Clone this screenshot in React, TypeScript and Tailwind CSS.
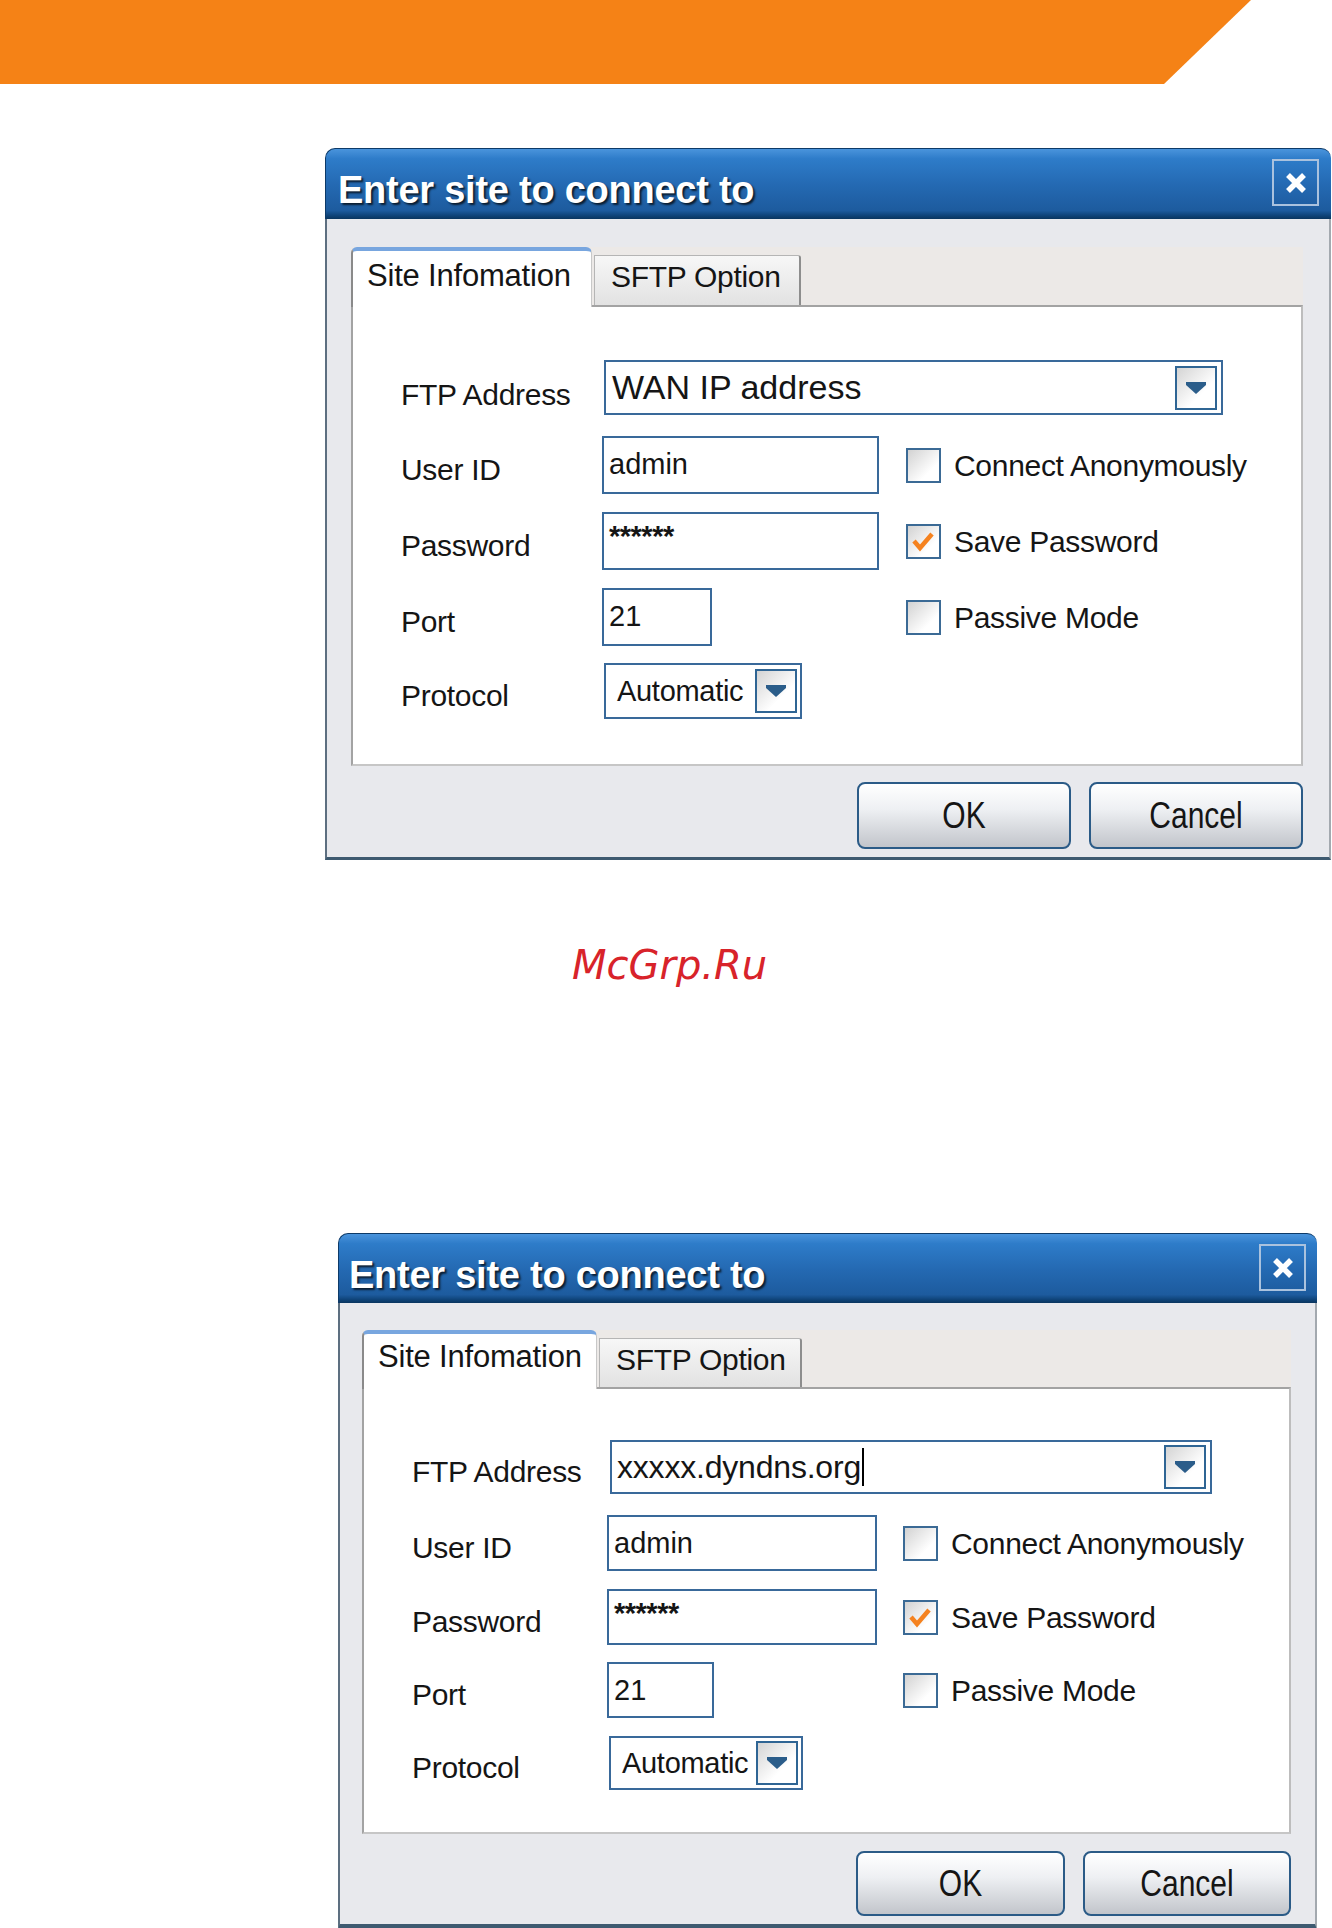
import clsx from "clsx";

type Size = {
  outer: string;
  bar: string;
  body: string;
  strip: string;
  activeTab: string;
  sftpTab: string;
  panel: string;
  labelCol: string;
  rows: string[];
  firstLabel: string;
  combo: string;
  field: string;
  port: string;
  proto: string;
  checkGap: string;
  btnRow: string;
  ok: string;
  cancel: string;
};

const upper: Size = {
  outer: "ml-[325px] mt-[64px] w-[1006px]",
  bar: "h-[71px] pl-[12px] pr-[12px]",
  body: "pl-[24px] pr-[26px] pt-[28px] pb-[8px] border-b-[3px]",
  strip: "h-[58px]",
  activeTab: "w-[241px] h-[60px] pt-[7px]",
  sftpTab: "w-[207px] h-[50px] mt-[8px]",
  panel: "h-[461px] pt-[53px]",
  labelCol: "w-[201px]",
  rows: ["h-[55px]", "mt-[21px] h-[58px]", "mt-[18px] h-[58px]", "mt-[18px] h-[58px]", "mt-[17px] h-[56px]"],
  firstLabel: "pt-[14px]",
  combo: "ml-[2px] w-[619px] pl-[6px] pr-[4px] text-[34px]",
  field: "w-[277px]",
  port: "w-[110px]",
  proto: "ml-[2px] w-[198px] pr-[3px]",
  checkGap: "ml-[27px]",
  btnRow: "mt-[16px]",
  ok: "h-[67px] w-[214px]",
  cancel: "h-[67px] w-[214px]",
};

const lower: Size = {
  outer: "ml-[338px] mt-[245px] w-[979px]",
  bar: "h-[70px] pl-[10px] pr-[11px]",
  body: "pl-[22px] pr-[24px] pt-[27px] pb-[8px] border-b-[6px]",
  strip: "h-[57px]",
  activeTab: "w-[235px] h-[59px] pt-[5px]",
  sftpTab: "w-[203px] h-[49px] mt-[8px]",
  panel: "h-[447px] pt-[51px]",
  labelCol: "w-[195px]",
  rows: ["h-[54px]", "mt-[21px] h-[56px]", "mt-[18px] h-[56px]", "mt-[17px] h-[56px]", "mt-[18px] h-[54px]"],
  firstLabel: "pt-[9px]",
  combo: "ml-[3px] w-[602px] pl-[5px] pr-[4px] text-[32px] tracking-[-0.2px]",
  field: "w-[270px]",
  port: "w-[107px]",
  proto: "ml-[2px] w-[194px] pr-[3px]",
  checkGap: "ml-[26px]",
  btnRow: "mt-[17px]",
  ok: "h-[65px] w-[209px]",
  cancel: "h-[65px] w-[208px]",
};

function CloseX() {
  return (
    <svg width="22" height="22" viewBox="0 0 22 22">
      <path d="M3 3L19 19M19 3L3 19" stroke="#ffffff" strokeWidth="5.5" />
    </svg>
  );
}

function DropButton() {
  return (
    <div className="flex h-[44px] w-[42px] shrink-0 items-center justify-center border-2 border-[#2f6594] bg-[linear-gradient(135deg,#d4d4d4,#ffffff_65%)]">
      <svg width="20" height="12" viewBox="0 0 20 12">
        <path d="M0 0H20V3L10 12L0 3Z" fill="#2b5d8a" />
      </svg>
    </div>
  );
}

function Check({ on, label, gap }: { on?: boolean; label: string; gap: string }) {
  return (
    <div className={clsx("flex items-center", gap)}>
      <div className="size-[35px] shrink-0 border-2 border-[#3b6a95] bg-[linear-gradient(135deg,#d2d2d2,#ffffff_70%)]">
        {on && (
          <svg width="31" height="31" viewBox="0 0 31 31">
            <path d="M6 15L12 22L24 8" fill="none" stroke="#f5821f" strokeWidth="4.5" />
          </svg>
        )}
      </div>
      <span className="ml-[13px] text-[30px] leading-[35px] tracking-[-0.3px] whitespace-nowrap">{label}</span>
    </div>
  );
}

function Label({ text, col, extra }: { text: string; col: string; extra?: string }) {
  return (
    <div className={clsx("shrink-0 text-[30px] leading-[35px] tracking-[-0.3px]", col, extra ?? "pt-[8px]")}>
      {text}
    </div>
  );
}

function Dialog({ s, address, cursor }: { s: Size; address: string; cursor?: boolean }) {
  const box = "h-full border-2 border-[#39699a] bg-white pl-[5px] text-[29px] leading-[33px]";
  return (
    <div className={clsx("flex flex-col", s.outer)}>
      <div
        className={clsx(
          "flex justify-between rounded-t-[10px] border-l border-t border-[#0d3a68] bg-[linear-gradient(180deg,#4a94dc_0%,#2e7cc9_14%,#2469b2_52%,#1d5b9e_88%,#0f4479_95%,#0a355f_100%)]",
          s.bar
        )}
      >
        <span className="self-center pt-[12px] text-[38px] leading-[44px] font-bold tracking-[-0.25px] text-white [text-shadow:2px_2px_2px_#0b1d30]">
          Enter site to connect to
        </span>
        <div className="mt-[10px] flex size-[47px] items-center justify-center border-2 border-[#aac2de]">
          <CloseX />
        </div>
      </div>

      <div className={clsx("border-l-2 border-r-2 border-l-[#5d6f80] border-r-[#a3a9af] border-b-[#3e5a70] bg-[#e8e9ed]", s.body)}>
        <div className={clsx("flex items-start bg-[#ece9e7]", s.strip)}>
          <div
            className={clsx(
              "relative z-10 rounded-t-[6px] border-t-[4px] border-l-2 border-r border-t-[#78a6df] border-l-[#8a8a8a] border-r-[#c8c8c8] bg-white pl-[14px] text-[31px] leading-[36px] tracking-[-0.2px] whitespace-nowrap",
              s.activeTab
            )}
          >
            Site Infomation
          </div>
          <div
            className={clsx(
              "ml-[2px] rounded-tr-[3px] border-t border-l border-r-2 border-[#b5b5b5] border-r-[#8d8d8d] bg-[linear-gradient(180deg,#f7f7f7,#e2e2e2)] pt-[3px] pl-[16px] text-[30px] leading-[36px] tracking-[-0.3px] whitespace-nowrap",
              s.sftpTab
            )}
          >
            SFTP Option
          </div>
        </div>

        <div className={clsx("flex flex-col border-2 border-[#a3a3a3] border-r-[#bdbdbd] border-b-[#c6c6c6] bg-white pl-[48px]", s.panel)}>
          <div className={clsx("flex items-center", s.rows[0])}>
            <Label text="FTP Address" col={s.labelCol} extra={s.firstLabel} />
            <div className={clsx("flex h-full items-center justify-between border-2 border-[#39699a] bg-white leading-[39px]", s.combo)}>
              <span className="flex items-center whitespace-nowrap">
                {address}
                {cursor && <span className="ml-[1px] inline-block h-[38px] w-[2px] bg-black" />}
              </span>
              <DropButton />
            </div>
          </div>

          <div className={clsx("flex items-center", s.rows[1])}>
            <Label text="User ID" col={s.labelCol} />
            <div className={clsx("h-full shrink-0", s.field)}>
              <div className={clsx(box, "w-full pt-[10px]")}>admin</div>
            </div>
            <Check label="Connect Anonymously" gap={s.checkGap} />
          </div>

          <div className={clsx("flex items-center", s.rows[2])}>
            <Label text="Password" col={s.labelCol} />
            <div className={clsx("h-full shrink-0", s.field)}>
              <div className={clsx(box, "w-full pt-[6px] text-[21px] font-bold tracking-[-0.5px]")}>******</div>
            </div>
            <Check on label="Save Password" gap={s.checkGap} />
          </div>

          <div className={clsx("flex items-center", s.rows[3])}>
            <Label text="Port" col={s.labelCol} />
            <div className={clsx("h-full shrink-0", s.field)}>
              <div className={clsx(box, "pt-[10px]", s.port)}>21</div>
            </div>
            <Check label="Passive Mode" gap={s.checkGap} />
          </div>

          <div className={clsx("flex items-center", s.rows[4])}>
            <Label text="Protocol" col={s.labelCol} />
            <div className={clsx("flex h-full items-center justify-between border-2 border-[#39699a] bg-white pl-[11px] text-[29px] leading-[33px] tracking-[-0.3px]", s.proto)}>
              <span>Automatic</span>
              <DropButton />
            </div>
          </div>
        </div>

        <div className={clsx("flex justify-end gap-[18px]", s.btnRow)}>
          <Button className={s.ok}>OK</Button>
          <Button className={s.cancel}>Cancel</Button>
        </div>
      </div>
    </div>
  );
}

function Button({ className, children }: { className: string; children: string }) {
  return (
    <div
      className={clsx(
        "flex items-center justify-center rounded-[8px] border-2 border-[#2b5b87] bg-[linear-gradient(180deg,#ffffff_0%,#eef0f3_40%,#c2c5cb_100%)] text-[30px] leading-[35px]",
        className
      )}
    >
      <span className="inline-block scale-y-[1.2]">{children}</span>
    </div>
  );
}

export default function App() {
  return (
    <div className="relative h-[1928px] w-[1332px] overflow-hidden bg-white font-['Liberation_Sans',Arial,sans-serif] text-[#151515]">
      <div className="h-[84px] w-full bg-[#f58216] [clip-path:polygon(0_0,1251px_0,1164px_100%,0_100%)]" />

      <Dialog s={upper} address="WAN IP address" />

      <div className="ml-[572px] mt-[82px] h-[46px] font-['DejaVu_Sans',sans-serif] text-[40px] leading-[46px] italic text-[#d8232a]">
        McGrp.Ru
      </div>

      <Dialog s={lower} address="xxxxx.dyndns.org" cursor />
    </div>
  );
}
